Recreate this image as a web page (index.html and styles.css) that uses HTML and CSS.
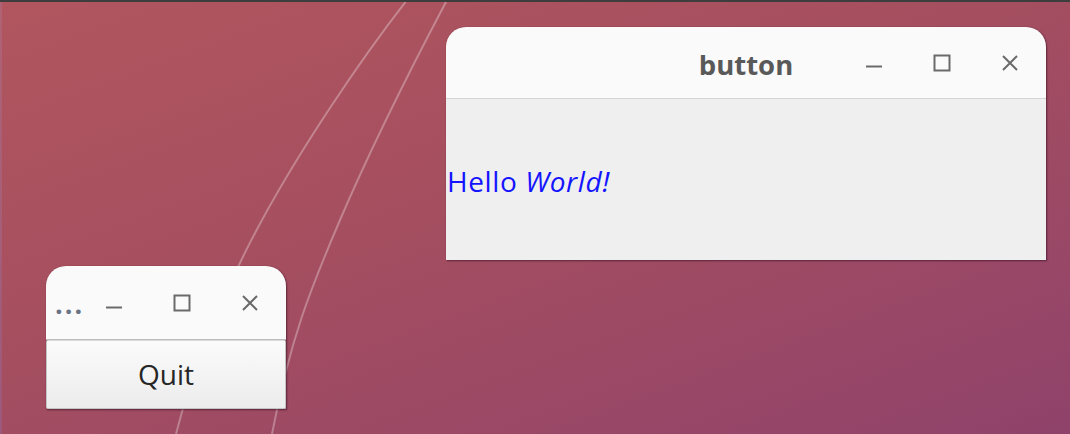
FILE: index.html
```html
<!DOCTYPE html>
<html lang="en">
<head>
<meta charset="utf-8">
<title>Desktop</title>
<link rel="stylesheet" href="styles.css">
</head>
<body>
<div class="screen">
  <div class="topstrip"></div>
  <div class="desktop">
    <svg class="wallpaper" width="1070" height="432" viewBox="0 2 1070 432" aria-hidden="true">
      <path d="M407 0 C 360 60, 300 150, 262 220 S 195 360, 176 434" />
      <path d="M447 0 C 410 70, 370 150, 340 220 S 290 340, 272 434" />
    </svg>

    <div class="window win-main">
      <div class="titlebar">
        <span></span>
        <span class="title">button</span>
        <div class="controls">
          <span class="ctl"><svg width="18" height="18" viewBox="0 0 18 18"><path d="M1 12.5h16"/></svg></span>
          <span class="ctl"><svg width="18" height="18" viewBox="0 0 18 18"><rect x="1.5" y="1.5" width="15" height="15"/></svg></span>
          <span class="ctl"><svg width="18" height="18" viewBox="0 0 18 18"><path d="M2 2l14 14M16 2L2 16"/></svg></span>
        </div>
      </div>
      <div class="content">
        <p class="label">Hello <i>World!</i></p>
      </div>
    </div>

    <div class="window win-small">
      <div class="titlebar small-bar">
        <span class="title small-title">...</span>
        <div class="controls">
          <span class="ctl"><svg width="18" height="18" viewBox="0 0 18 18"><path d="M1 13.5h16"/></svg></span>
          <span class="ctl"><svg width="18" height="18" viewBox="0 0 18 18"><rect x="1.5" y="1.5" width="15" height="15"/></svg></span>
          <span class="ctl"><svg width="18" height="18" viewBox="0 0 18 18"><path d="M2 2l14 14M16 2L2 16"/></svg></span>
        </div>
      </div>
      <button class="quit" type="button">Quit</button>
    </div>
  </div>
</div>
</body>
</html>
```
FILE: styles.css
```css
* { box-sizing: border-box; }
html, body { margin: 0; padding: 0; }
body {
  width: 1070px;
  height: 434px;
  overflow: hidden;
  font-family: "Open Sans", "DejaVu Sans", sans-serif;
}
.screen {
  width: 1070px;
  height: 434px;
  display: flex;
  flex-direction: column;
}
.topstrip {
  height: 2px;
  background: #3d3d3d;
  flex: none;
}
.desktop {
  position: relative;
  flex: 1;
  background: linear-gradient(160deg, #b1565f 0%, #a64f5f 40%, #9a4866 75%, #8f426a 100%);
  border-left: 2px solid rgba(255, 255, 255, 0.12);
}
.wallpaper {
  position: absolute;
  left: -2px;
  top: 0;
}
.wallpaper path {
  fill: none;
  stroke: rgba(255, 255, 255, 0.3);
  stroke-width: 2;
}
.window {
  position: absolute;
  display: flex;
  flex-direction: column;
  border-radius: 20px 20px 0 0;
  box-shadow: 1px 1px 2px rgba(40, 10, 30, 0.55), 0 0 1px rgba(40, 10, 30, 0.3);
}
.win-main {
  left: 444px;
  top: 25px;
  width: 600px;
  height: 233px;
}
.titlebar {
  display: grid;
  grid-template-columns: 1fr auto 1fr;
  align-items: center;
  height: 72px;
  background: #fafafa;
  border-radius: 20px 20px 0 0;
  border-bottom: 1px solid #d5d5d5;
  flex: none;
}
.title {
  font-weight: 700;
  font-size: 27.5px;
  color: #595959;
  line-height: 1;
  padding-top: 4px;
}
.controls {
  display: flex;
  justify-content: flex-end;
  gap: 50px;
  padding-right: 27px;
}
.ctl {
  display: flex;
  width: 18px;
  height: 18px;
}
.ctl svg {
  fill: none;
  stroke: #6a6a6a;
  stroke-width: 2;
}
.content {
  flex: 1;
  background: #efefef;
  display: flex;
  align-items: center;
  padding-left: 1px;
}
.label {
  margin: 0;
  font-size: 28px;
  letter-spacing: 0.6px;
  color: #1414ff;
  line-height: 1;
  padding-top: 2px;
}
.win-small {
  left: 44px;
  top: 264px;
  width: 240px;
  height: 143px;
}
.small-bar {
  grid-template-columns: auto 1fr;
  height: 74px;
  border-bottom: 1px solid #bdbdbd;
}
.small-title {
  padding-left: 9px;
  letter-spacing: 2px;
  color: #6a7286;
  padding-top: 2px;
  font-size: 27px;
}
.quit {
  flex: 1;
  margin: 0;
  font-family: inherit;
  font-size: 28px;
  color: #262626;
  background: linear-gradient(#fbfbfb, #ececec);
  border: 1px solid #c4c4c4;
  border-top-color: #d8d8d8;
  border-radius: 2px;
  padding: 0 0 2px;
}
```
